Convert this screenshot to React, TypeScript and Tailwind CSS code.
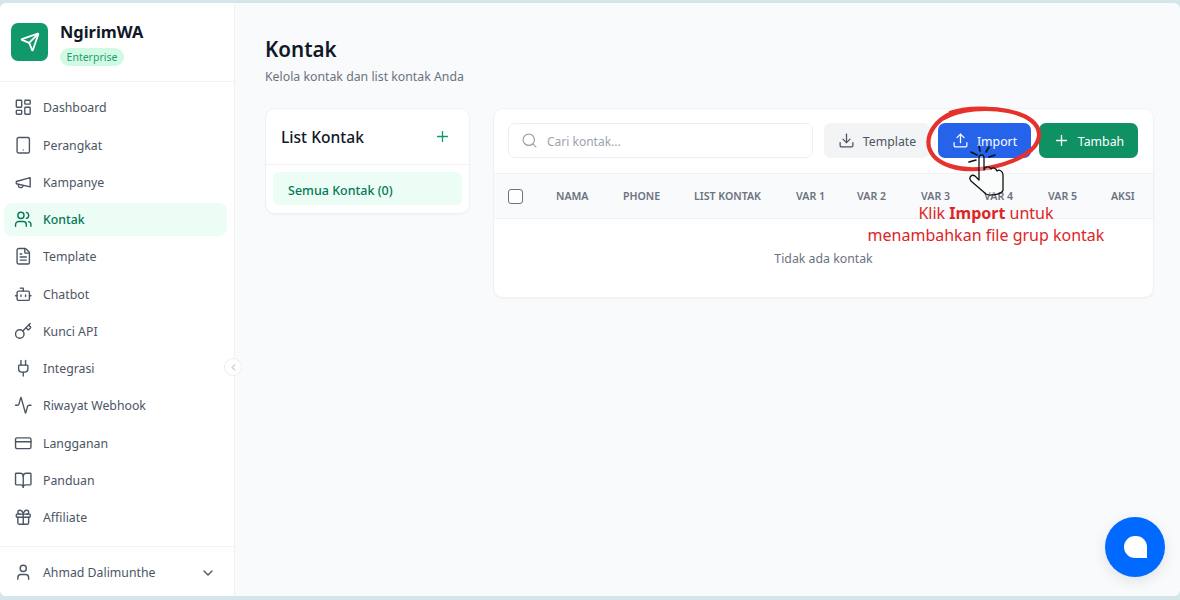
import { Activity, BookOpen, Bot, ChevronDown, ChevronLeft, CreditCard, Download, FileText, Gift, Key, LayoutDashboard, Plug, Plus, Search, Send, Tablet, Upload, User, Users } from 'lucide-react';

// older flat megaphone, the one in the package has a bar on the wide end
function Horn({ size, strokeWidth, className }: { size: number; strokeWidth: number; className?: string }) {
  return (
    <svg className={className} width={size} height={size} viewBox="0 0 24 24" fill="none" stroke="currentColor" strokeWidth={strokeWidth} strokeLinecap="round" strokeLinejoin="round">
      <path d="m3 11 18-5v12L3 14v-3z" />
      <path d="M11.6 16.8a3 3 0 1 1-5.8-1.6" />
    </svg>
  );
}

const NAV = [
  { label: 'Dashboard', icon: LayoutDashboard },
  { label: 'Perangkat', icon: Tablet },
  { label: 'Kampanye', icon: Horn },
  { label: 'Kontak', icon: Users, active: true },
  { label: 'Template', icon: FileText },
  { label: 'Chatbot', icon: Bot },
  { label: 'Kunci API', icon: Key },
  { label: 'Integrasi', icon: Plug },
  { label: 'Riwayat Webhook', icon: Activity },
  { label: 'Langganan', icon: CreditCard },
  { label: 'Panduan', icon: BookOpen },
  { label: 'Affiliate', icon: Gift },
];

const COLUMNS = ['NAMA', 'PHONE', 'LIST KONTAK', 'VAR 1', 'VAR 2', 'VAR 3', 'VAR 4', 'VAR 5', 'AKSI'];

function Sidebar() {
  return (
    <aside className="w-[235px] shrink-0 bg-white border-r border-[#f0f1f3] flex flex-col">
      {/* Logo */}
      <div className="h-[79px] shrink-0 border-b border-[#f1f2f4] flex items-center gap-3 pl-[11px] pb-[1px]">
        <div className="w-[37px] h-[38px] rounded-[7px] bg-[#12996b] flex items-center justify-center">
          <Send size={20} strokeWidth={2.2} className="text-white" />
        </div>
        <div className="pt-[4px]">
          <p className="text-[16.4px] leading-[22px] font-bold text-[#111827]">NgirimWA</p>
          <span className="mt-[5px] block w-[64px] h-[18px] rounded-full bg-[#d1fae5] text-[10.5px] leading-[18px] text-center text-[#1f9d73]">Enterprise</span>
        </div>
      </div>

      {/* Menu */}
      <nav className="flex-1 pt-[9px] pl-[4px] pr-[7px] flex flex-col gap-[4.27px]">
        {NAV.map(item => {
          const Icon = item.icon;
          return (
            <div
              key={item.label}
              className={`h-[33px] rounded-[8px] flex items-center gap-[10.5px] pl-[10px] text-[12.3px] ${item.active ? 'bg-[#ecfdf5] text-[#047857] font-medium' : 'text-[#4b5563]'}`}
            >
              <Icon size={18.5} strokeWidth={1.8} className="shrink-0" />
              <span className="pt-[2px]">{item.label}</span>
            </div>
          );
        })}
      </nav>

      {/* User */}
      <div className="h-[50px] shrink-0 border-t border-[#f1f2f4] flex items-center pl-[14px] pr-[18px] pt-[2px] text-[12.3px] text-[#4b5563]">
        <User size={18.5} strokeWidth={1.8} className="shrink-0" />
        <span className="ml-[10.5px] pt-[2px] flex-1">Ahmad Dalimunthe</span>
        <ChevronDown size={16} strokeWidth={2} />
      </div>
    </aside>
  );
}

function ListCard() {
  return (
    <div className="w-[205px] h-[106px] shrink-0 rounded-[10px] bg-white border border-[#f0f1f3] shadow-[0_1px_2px_rgba(0,0,0,0.03)]">
      <div className="h-[56px] border-b border-[#f0f1f3] flex items-center justify-between pl-[15px] pr-[18px]">
        <h2 className="pt-[2px] text-[15.6px] font-medium text-[#111827]">List Kontak</h2>
        <Plus size={17} strokeWidth={1.8} className="text-[#12996b]" />
      </div>
      <div className="px-[7px] pt-[7px]">
        <div className="h-[33px] rounded-[6px] bg-[#ecfdf5] pl-[15px] pt-[5px] flex items-center text-[12.5px] font-medium text-[#047857]">Semua Kontak (0)</div>
      </div>
    </div>
  );
}

function TableCard() {
  return (
    <div className="w-[661px] h-[190px] shrink-0 rounded-[10px] bg-white border border-[#f0f1f3] shadow-[0_1px_2px_rgba(0,0,0,0.03)] flex flex-col">
      <div className="h-[64px] shrink-0 flex items-center pl-[14px] pr-[15px] pb-[1px] gap-[8px]">
        <div className="w-[305px] h-[35px] rounded-[7px] border border-[#eceef1] flex items-center pl-[12px] gap-[9px] mr-[3px] text-[12px] text-[#9ca3af]">
          <Search size={17} strokeWidth={1.7} />
          <span className="pt-[3px]">Cari kontak...</span>
        </div>
        <div className="w-[106px] h-[35px] rounded-[7px] bg-[#f3f4f6] flex items-center justify-center gap-[8px] text-[12.3px] text-[#4b5563]">
          <Download size={17} strokeWidth={1.8} />
          <span className="pt-[3px]">Template</span>
        </div>
        <div className="w-[93px] h-[35px] rounded-[7px] bg-[#2563eb] flex items-center justify-center gap-[8px] text-[12.3px] text-white">
          <Upload size={17} strokeWidth={1.8} />
          <span className="pt-[3px]">Import</span>
        </div>
        <div className="w-[99px] h-[35px] rounded-[7px] bg-[#0f9164] flex items-center justify-center gap-[8px] text-[12.3px] text-white">
          <Plus size={17} strokeWidth={1.8} />
          <span className="pt-[3px]">Tambah</span>
        </div>
      </div>
      <div className="h-[46px] shrink-0 bg-[#f9fafb] border-y border-[#f0f1f3] grid grid-cols-[48px_67px_71px_102px_61px_64px_63px_64px_63px_auto] items-center pl-[14px]">
        <div className="w-[15px] h-[15px] rounded-[3px] border border-[#6b7280] bg-white" />
        {COLUMNS.map(col => (
          <span key={col} className="pt-[2px] text-[10.6px] font-semibold text-[#6b7280] whitespace-nowrap">{col}</span>
        ))}
      </div>
      <div className="flex-1 flex items-center justify-center pt-[2px] text-[12.3px] text-[#6b7280]">Tidak ada kontak</div>
    </div>
  );
}

// Hand-drawn tutorial marks laid over the Import button
function ClickMark() {
  return (
    <svg className="absolute left-[920px] top-[100px]" width="130" height="100" viewBox="0 0 130 100" fill="none">
      <path d="M 22 19 C 40 8 68 7 88 11 C 108 15 120 24 119 36 C 118 50 98 62 68 68 C 42 72 14 66 9 47 C 6 34 16 20 32 13" stroke="#e5322d" strokeWidth="4.2" strokeLinecap="round" />
      <path d="M 30 12 C 52 5 80 7 100 15" stroke="#e5322d" strokeWidth="2.4" strokeLinecap="round" />
      <path d="M 59 58 C 59 54 64 54 64 58 L 64 70 C 65 66 70 66 71 69 C 73 67 76 68 77 71 C 79 69 83 71 83 75 L 83 90 C 82 95 69 96 66 94 L 51 81 C 48 77 52 74 55 76 L 59 80 Z" fill="#ffffff" fillOpacity="0.35" stroke="#111111" strokeWidth="1.3" strokeLinejoin="round" />
      <path d="M 49 62 L 56 60 M 51 52 L 57 55 M 59 46 L 60 51 M 69 47 L 66 52 M 75 55 L 69 57" stroke="#111111" strokeWidth="1.6" strokeLinecap="round" />
    </svg>
  );
}

export default function App() {
  return (
    <div className="relative w-[1180px] h-[600px] overflow-hidden bg-[#d3e6ea] pt-[3px] pb-[4px] [font-family:'Noto_Sans','Open_Sans',sans-serif]">
      <div className="h-full flex rounded-[6px] overflow-hidden bg-[#f9fafb]">
        <Sidebar />
        <main className="flex-1 pl-[30px] pt-[32px]">
          <h1 className="text-[20.6px] leading-[28px] font-semibold text-[#111827]">Kontak</h1>
          <p className="mt-[5px] text-[12.3px] leading-[18px] text-[#6b7280]">Kelola kontak dan list kontak Anda</p>
          <div className="mt-[22px] flex gap-[23px]">
            <ListCard />
            <TableCard />
          </div>
        </main>
      </div>

      {/* Sidebar collapse toggle */}
      <div className="absolute left-[224px] top-[358px] w-[18px] h-[18px] rounded-full bg-white border border-[#eceef1] flex items-center justify-center text-[#9ca3af]">
        <ChevronLeft size={11} strokeWidth={2} />
      </div>

      <ClickMark />

      {/* Tutorial caption */}
      <div className="absolute left-[836px] top-[202px] w-[300px] text-center text-[16px] leading-[22px] text-[#dc2626]">
        <p>Klik <b className="font-bold">Import</b> untuk</p>
        <p>menambahkan file grup kontak</p>
      </div>

      {/* Chat launcher */}
      <div className="absolute left-[1105px] top-[517px] w-[60px] h-[60px] rounded-full bg-[#0069ff] shadow-[0_4px_14px_rgba(0,0,0,0.1)] flex items-center justify-center">
        <div className="w-[23px] h-[22px] rounded-t-full rounded-bl-full bg-white" />
      </div>
    </div>
  );
}
